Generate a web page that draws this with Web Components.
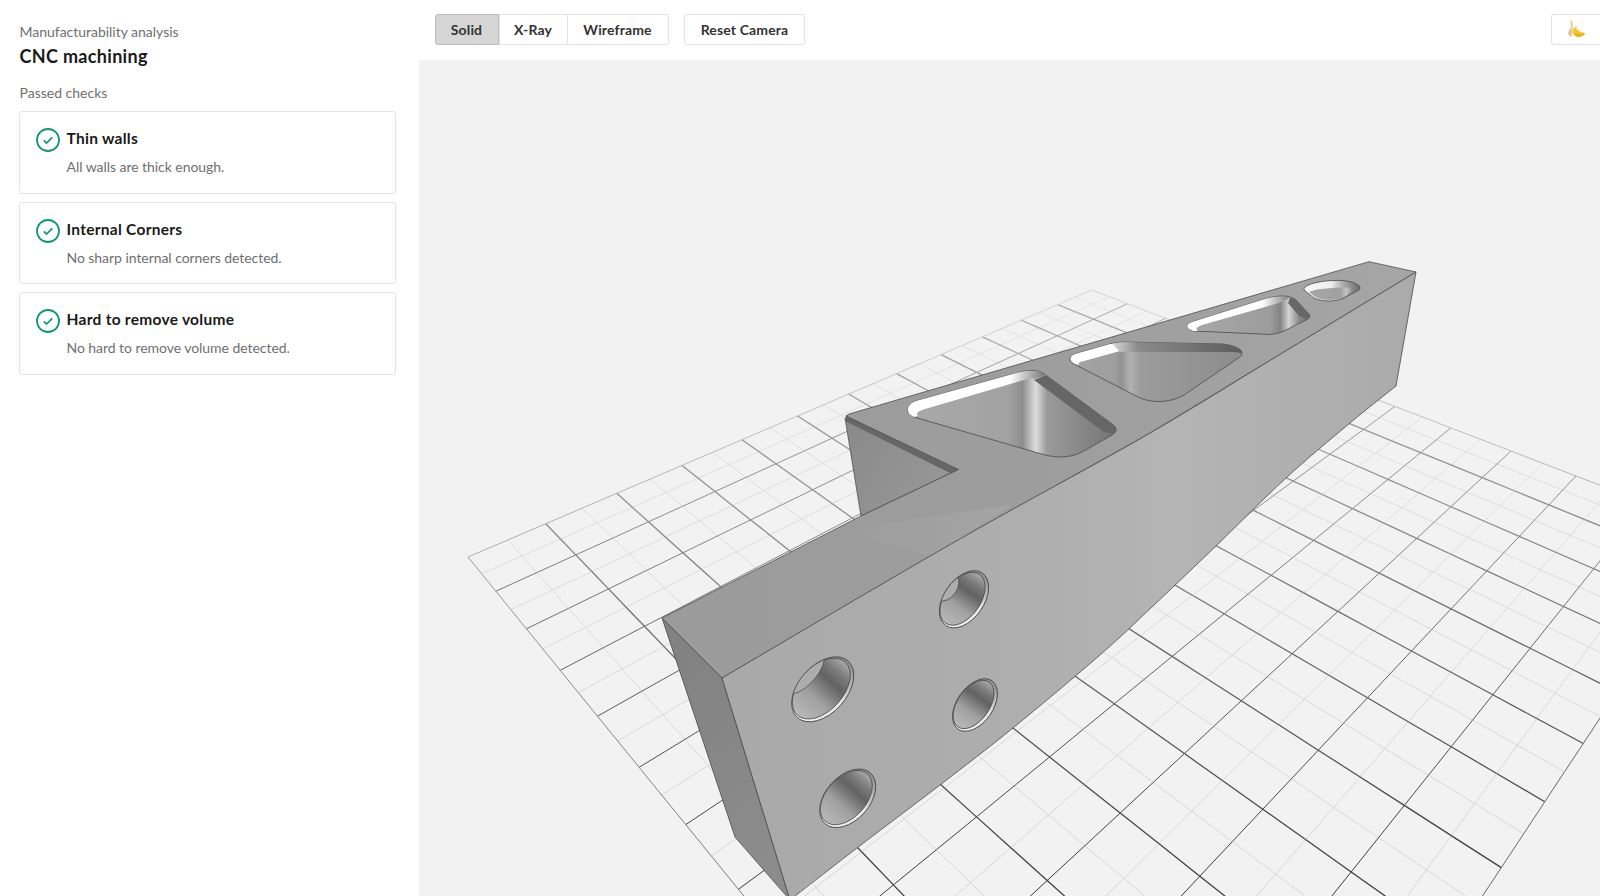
<!DOCTYPE html>
<html><head><meta charset="utf-8"><title>CNC machining</title>
<style>html,body{margin:0;height:100%;overflow:hidden;background:#fff;font-family:Lato,"Liberation Sans",sans-serif}</style>
</head><body>
<app-shell>
  <side-panel slot="side">
    <check-card title-text="Thin walls" desc="All walls are thick enough."></check-card>
    <check-card title-text="Internal Corners" desc="No sharp internal corners detected."></check-card>
    <check-card title-text="Hard to remove volume" desc="No hard to remove volume detected."></check-card>
  </side-panel>
  <tool-bar slot="main"></tool-bar>
  <viewer-canvas slot="main"></viewer-canvas>
</app-shell>
<script>
customElements.define('app-shell',class extends HTMLElement{constructor(){super();this.attachShadow({mode:'open'}).innerHTML=`<style>
:host{display:grid;grid-template-columns:419px 1fr;height:896px;width:1600px;overflow:hidden}
.m{display:flex;flex-direction:column;min-width:0;height:896px;overflow:hidden}
</style><slot name="side"></slot><div class="m"><slot name="main"></slot></div>`}});

customElements.define('side-panel',class extends HTMLElement{constructor(){super();this.attachShadow({mode:'open'}).innerHTML=`<style>
:host{display:block;padding:22px 23px 0 19px;font-family:Lato,"Liberation Sans",sans-serif}
.e{font-size:14px;line-height:20px;color:#707070;padding-left:.5px;letter-spacing:-.02px}
h1{margin:2px 0 0;font-size:18px;line-height:24px;font-weight:700;color:#1a1a1a;letter-spacing:.33px;padding-left:.5px}
.p{margin:15px 0 8px;font-size:14px;line-height:20px;color:#707070;padding-left:.5px}
.l{display:flex;flex-direction:column;gap:8px}
</style><div class="e">Manufacturability analysis</div><h1>CNC machining</h1><div class="p">Passed checks</div><div class="l"><slot></slot></div>`}});

customElements.define('check-card',class extends HTMLElement{constructor(){super();this.attachShadow({mode:'open'}).innerHTML=`<style>
:host{display:grid;grid-template-columns:24px 1fr;column-gap:7px;box-sizing:border-box;height:82.5px;padding:14px 15px 0 15.5px;border:1px solid #e3e3e3;border-radius:3px;background:#fff}
svg{width:24px;height:24px;margin-top:2px;display:block}
.t{font-size:15.5px;line-height:24px;font-weight:700;color:#1a1a1a;letter-spacing:.28px}
.d{margin-top:7px;font-size:14px;line-height:20px;color:#6f6f6f;letter-spacing:-.05px}
</style><svg viewBox="0 0 24 24" fill="none" stroke="#12996b"><circle cx="12" cy="12" r="11" stroke-width="1.8"/><path d="M7.800 12.300l2.700 2.800 5.800-5.800" stroke-width="1.700"/></svg><div><div class="t"></div><div class="d"></div></div>`}
connectedCallback(){this.shadowRoot.querySelector('.t').textContent=this.getAttribute('title-text');this.shadowRoot.querySelector('.d').textContent=this.getAttribute('desc')}});

customElements.define('tool-bar',class extends HTMLElement{constructor(){super();this.attachShadow({mode:'open'}).innerHTML=`<style>
:host{display:flex;flex:none;box-sizing:border-box;height:60px;padding:14px 0 0 15.5px;background:#fff;font-family:Lato,"Liberation Sans",sans-serif;margin-right:-40px}
button{all:unset;box-sizing:border-box;height:31px;display:flex;align-items:center;justify-content:center;font-size:14px;font-weight:700;color:#333;background:#fff;border:1px solid #e3e3e3;letter-spacing:.14px}
.g{display:flex}
.g button{border-right:0}
.g button:first-child{border-radius:3px 0 0 3px;background:#d6d6d6;border-color:#bcbcbc;border-right:1px solid #bcbcbc;width:64px}
.g button:nth-child(2){width:68px}
.g button:nth-child(3){width:102px;border-right:1px solid #e3e3e3;border-radius:0 3px 3px 0}
.r{margin-left:15.5px;width:121px;border-radius:3px}
.b{margin-left:auto;width:89px;border-radius:3px 0 0 3px;border-right:0;justify-content:flex-start;padding:0 0 0 16px}
svg{width:18px;height:18px;display:block;margin-top:-4px}
</style><div class="g"><button>Solid</button><button>X-Ray</button><button>Wireframe</button></div><button class="r">Reset Camera</button><button class="b" aria-label="banana"><svg viewBox="0 0 18 18"><path d="M3 .5C2 3 2.500 6 3 8L5 11C4.800 7 5 3 3.500 .5Z" fill="#e4cfa6"/><path d="M0 14C.5 11 2 9 4 8.500L5 13C4.500 15 3.500 17 2.500 18 1.500 17.500 .5 16 0 14Z" fill="#dfc89e"/><path d="M6 8C7 6.500 9 6.500 10 7.500 9 8 8.500 8.500 8.500 9.500Z" fill="#f1e4c6"/><path d="M5.500 9C7 8 8 9 8.800 10 10.500 12.300 14 13.500 17 14 16.500 16.500 13 18 9.500 17.800 6.500 17.500 4.800 14.500 5 12Z" fill="#f8c820"/><path d="M5.500 13.500C7.500 15.300 12 16 17 14 16.500 16.500 13 18 9.500 17.800 7.500 17.600 6 15.500 5.500 13.500Z" fill="#eeae14"/></svg></button>`}});

customElements.define('viewer-canvas',class extends HTMLElement{
constructor(){super();
const S=this.attachShadow({mode:'open'});
// ---------- ground grid: projective map from grid coords (u,v) to screen
const src=[[0,0],[12,0],[12,10],[7,10]],dst=[[468,557],[1092,290],[1576,476],[1411.5,651]];
const A=[];for(let k=0;k<4;k++){const[u,v]=src[k],[x,y]=dst[k];A.push([u,v,1,0,0,0,-u*x,-v*x,x]);A.push([0,0,0,u,v,1,-u*y,-v*y,y]);}
for(let i=0;i<8;i++){let p=i;for(let r=i;r<8;r++)if(Math.abs(A[r][i])>Math.abs(A[p][i]))p=r;[A[i],A[p]]=[A[p],A[i]];for(let r=0;r<8;r++)if(r!==i){const f=A[r][i]/A[i][i];for(let c=i;c<9;c++)A[r][c]-=f*A[i][c];}}
const H=A.map((r,i)=>r[8]/r[i]);
const P=(u,v)=>{const w=H[6]*u+H[7]*v+1;return[(H[0]*u+H[1]*v+H[2])/w,(H[3]*u+H[4]*v+H[5])/w,w]};
const hex=n=>{n=Math.round(n);return'rgb('+n+','+n+','+n+')'};
const mix=(a,b,t)=>a+(b-a)*Math.max(0,Math.min(1,t));
const shade=(w,kind)=>{
 if(kind==='minor')return mix(205,226,(w-.6)/.9);
 if(kind==='edge')return mix(110,200,(w-.7)/.8);
 if(kind==='near')return 105;
 return w<1.05?mix(60,140,(w-.7)/.35):mix(140,176,(w-1.05)/.5)};
let g='';
const seg=(f,kind,sw)=>{const n=24;for(let i=0;i<n;i++){const a=P(...f(i/n)),b=P(...f((i+1)/n));const c=(a[2]+b[2])/2;
 if(a[1]>930&&b[1]>930)continue;
 g+=`<line x1="${a[0].toFixed(1)}" y1="${a[1].toFixed(1)}" x2="${b[0].toFixed(1)}" y2="${b[1].toFixed(1)}" stroke="${hex(shade(c,kind))}" stroke-width="${sw}"/>`}};
for(let k=1;k<24;k+=2){seg(t=>[k/2,t*12],'minor',.8);seg(t=>[t*12,k/2],'minor',.8)}
for(let k=1;k<12;k++){seg(t=>[t*12,k],'major',1);seg(t=>[k,t*12],'major',1.25)}
seg(t=>[t*12,0],'edge',.7);seg(t=>[0,t*12],'edge',.9);seg(t=>[12,t*12],'edge',.7);seg(t=>[t*12,12],'near',1);
// ---------- smooth curve through points (Catmull-Rom)
const smooth=pts=>{let d='';for(let i=0;i<pts.length-1;i++){const p0=pts[Math.max(0,i-1)],p1=pts[i],p2=pts[i+1],p3=pts[Math.min(pts.length-1,i+2)];
 d+=`C${(p1[0]+(p2[0]-p0[0])/6).toFixed(1)} ${(p1[1]+(p2[1]-p0[1])/6).toFixed(1)} ${(p2[0]-(p3[0]-p1[0])/6).toFixed(1)} ${(p2[1]-(p3[1]-p1[1])/6).toFixed(1)} ${p2[0]} ${p2[1]}`}return d};
const lower=smooth([[1396,386],[1350,423],[1286,478],[1217,545],[1153,606],[1100,655],[1013,728],[940,785],[857,848],[790,900]]);
const upper=smooth([[722,678],[958,540],[1145,436],[1279,355],[1416,272]]);
// ---------- holes on the front face
const hole=(id,cx,cy,a,b,r,cres)=>`<g transform="translate(${cx} ${cy}) rotate(${r})">
<ellipse rx="${a}" ry="${b}" fill="url(#rim)" stroke="#4a4a4a" stroke-width=".9"/>
<clipPath id="c${id}"><ellipse cx="-.4" cy="-1.500" rx="${a-2.2}" ry="${b-2}"/></clipPath>
<ellipse cx="-.4" cy="-1.500" rx="${a-2.2}" ry="${b-2}" fill="url(#hg)" stroke="#4a4a4a" stroke-width=".8"/>
${cres?`<ellipse clip-path="url(#c${id})" cx="0" cy="${-b}" rx="${a*cres}" ry="${b*.46}" fill="#adadad" stroke="#4a4a4a" stroke-width=".7"/>`:''}
</g>`;
S.innerHTML=`<style>:host{display:block;flex:1;min-height:0;background:#f2f2f2;overflow:hidden}svg{display:block;width:1181px;height:836px}</style>
<svg viewBox="419 60 1181 836" xmlns="http://www.w3.org/2000/svg">
<defs>
<linearGradient id="front" gradientUnits="userSpaceOnUse" x1="720" y1="0" x2="1420" y2="0"><stop offset="0" stop-color="#a9a9a9"/><stop offset=".4" stop-color="#adadad"/><stop offset=".65" stop-color="#b4b4b4"/><stop offset="1" stop-color="#aaaaaa"/></linearGradient>
<linearGradient id="top" gradientUnits="userSpaceOnUse" x1="660" y1="0" x2="1400" y2="0"><stop offset="0" stop-color="#9b9b9b"/><stop offset=".5" stop-color="#9d9d9d"/><stop offset="1" stop-color="#a5a5a5"/></linearGradient>
<linearGradient id="end" gradientUnits="userSpaceOnUse" x1="680" y1="660" x2="770" y2="860"><stop offset="0" stop-color="#828282"/><stop offset="1" stop-color="#8c8c8c"/></linearGradient>
<linearGradient id="wall" gradientUnits="userSpaceOnUse" x1="845" y1="430" x2="930" y2="480"><stop offset="0" stop-color="#8a8a8a"/><stop offset="1" stop-color="#959595"/></linearGradient>
<linearGradient id="hg" x1="0" x2="1" y1="0" y2="0"><stop offset="0" stop-color="#b8b8b8"/><stop offset=".35" stop-color="#a0a0a0"/><stop offset=".66" stop-color="#626262"/><stop offset=".82" stop-color="#7a7a7a"/><stop offset="1" stop-color="#aaaaaa"/></linearGradient>
<linearGradient id="rim" x1="0" x2="1" y1="0" y2="0"><stop offset="0" stop-color="#f0f0f0"/><stop offset=".55" stop-color="#e4e4e4"/><stop offset="1" stop-color="#8e8e8e"/></linearGradient>
<linearGradient id="f1" gradientUnits="userSpaceOnUse" x1="915" y1="0" x2="1118" y2="0"><stop offset="0" stop-color="#a8a8a8"/><stop offset=".46" stop-color="#a2a2a2"/><stop offset=".53" stop-color="#8e8e8e"/><stop offset=".595" stop-color="#dcdcdc"/><stop offset=".65" stop-color="#9a9a9a"/><stop offset="1" stop-color="#747474"/></linearGradient>
<linearGradient id="f2" gradientUnits="userSpaceOnUse" x1="1075" y1="0" x2="1242" y2="0"><stop offset="0" stop-color="#a4a4a4"/><stop offset=".24" stop-color="#9e9e9e"/><stop offset=".28" stop-color="#929292"/><stop offset=".33" stop-color="#b2b2b2"/><stop offset=".39" stop-color="#9c9c9c"/><stop offset="1" stop-color="#8c8c8c"/></linearGradient>
<linearGradient id="f3" gradientUnits="userSpaceOnUse" x1="1190" y1="0" x2="1312" y2="0"><stop offset="0" stop-color="#a8a8a8"/><stop offset=".66" stop-color="#9c9c9c"/><stop offset=".74" stop-color="#848484"/><stop offset=".81" stop-color="#d4d4d4"/><stop offset=".89" stop-color="#8c8c8c"/><stop offset="1" stop-color="#6c6c6c"/></linearGradient>
<linearGradient id="db2" gradientUnits="userSpaceOnUse" x1="1112" y1="0" x2="1242" y2="0"><stop offset="0" stop-color="#d8d8d8"/><stop offset=".2" stop-color="#8a8a8a"/><stop offset="1" stop-color="#5c5c5c"/></linearGradient>
<linearGradient id="w1" gradientUnits="userSpaceOnUse" x1="1010" y1="0" x2="1044" y2="0"><stop offset="0" stop-color="#fff"/><stop offset="1" stop-color="#7a7a7a"/></linearGradient>
<linearGradient id="w3" gradientUnits="userSpaceOnUse" x1="1262" y1="0" x2="1292" y2="0"><stop offset="0" stop-color="#fff"/><stop offset="1" stop-color="#777"/></linearGradient>
<linearGradient id="h4" gradientUnits="userSpaceOnUse" x1="1306" y1="0" x2="1360" y2="0"><stop offset="0" stop-color="#f6f6f6"/><stop offset=".45" stop-color="#f0f0f0"/><stop offset=".7" stop-color="#a8a8a8"/><stop offset="1" stop-color="#6c6c6c"/></linearGradient>
<linearGradient id="h4f" gradientUnits="userSpaceOnUse" x1="1308" y1="0" x2="1353" y2="0"><stop offset="0" stop-color="#a8a8a8"/><stop offset=".72" stop-color="#a0a0a0"/><stop offset=".85" stop-color="#c4c4c4"/><stop offset="1" stop-color="#8a8a8a"/></linearGradient>
<linearGradient id="facet" gradientUnits="userSpaceOnUse" x1="830" y1="0" x2="1010" y2="0"><stop offset="0" stop-color="#a3a3a3" stop-opacity="0"/><stop offset="1" stop-color="#a5a5a5"/></linearGradient>
</defs>
<g shape-rendering="geometricPrecision">${g}</g>
<!-- notch wall behind the top face -->
<path d="M845 418L958.500 469.500 861 516Z" fill="url(#wall)" stroke="#444" stroke-width=".7"/>
<path d="M846 415L958.500 469.500 950 473 845 421Z" fill="#676767"/>
<!-- end face -->
<path d="M662 618L722 678 790 900 735 837Z" fill="url(#end)" stroke="#4a4a4a" stroke-width=".8" stroke-linejoin="round"/>
<!-- top face -->
<path d="M662 618L861 516 958.500 469.500 846 416 849 414 1369 261.700 1416 272 L1279 355 1145 436 958 540 722 678Z" fill="url(#top)" stroke="#4c4c4c" stroke-width=".8" stroke-linejoin="round"/>
<path d="M835 530L1012 505 958 540 930 556Z" fill="url(#facet)"/>
<!-- front face -->
<path d="M722 678${upper}L1396 386${lower}Z" fill="url(#front)" stroke="#4a4a4a" stroke-width=".8" stroke-linejoin="round"/>
<!-- pocket 1 -->
<path d="M914 417C905 413 906 405 916 401L1020 372C1032 369 1040 370 1047 376L1112 424C1118 428 1117 432 1112 435L1082 452C1070 458 1058 458 1045 455Z" fill="url(#f1)" stroke="#4a4a4a" stroke-width=".8"/>
<path d="M914 417C905 413 906 405 916 401L1020 372C1030 370 1038 370 1045 375L1035 379C1031 378 1028 378 1024 380L925 409C919 411 915 413 918 416Z" fill="url(#w1)"/>
<path d="M1045 375.500L1047 376 1112 424C1116 427 1117 430 1114 434L1104 432 1034 380Z" fill="#666"/>
<!-- pocket 2 -->
<path d="M1074 364C1068 361 1069 356 1075 354L1110 344C1114 343 1118 342 1124 342L1222 344C1234 345 1242 349 1242 353 1242 356 1240 357 1237 359L1184 395C1172 402 1155 404 1140 398Z" fill="url(#f2)" stroke="#4a4a4a" stroke-width=".8"/>
<path d="M1075 364C1069 361 1069 356 1075 354L1110 344 1120 344 1120 351 1084 361C1079 362 1078 363 1079 365Z" fill="#fff"/>
<path d="M1112 343.500C1116 342.500 1120 342 1124 342L1222 344C1234 345 1242 349 1242 353L1233 352 1120 351.700Z" fill="url(#db2)"/>
<!-- pocket 3 -->
<path d="M1193 331C1186 328 1185 325 1192 322L1268 298C1280 295 1290 295 1296 300L1308 313C1311 316 1310 318 1306 320L1284 331C1277 334 1270 335 1262 334Z" fill="url(#f3)" stroke="#4a4a4a" stroke-width=".8"/>
<path d="M1193 331C1186 328 1185 325 1192 322L1268 298C1276 296 1284 296 1290 298L1279 303 1202 325C1196 327 1195 329 1198 331Z" fill="url(#w3)"/>
<path d="M1290 297.500C1293 298 1295 299 1296 300L1308 313C1311 316 1310 318 1307 319L1300 317 1288 303Z" fill="#686868"/>
<!-- pocket 4 -->
<path d="M1304 290C1303 286 1312 283 1322 281.500 1336 279.500 1352 280 1358 285 1362 288 1360 290 1355 292L1344 298C1336 302 1322 302 1314 298Z" fill="url(#h4)" stroke="#4a4a4a" stroke-width=".8"/>
<path d="M1309 292C1315 289 1330 287.500 1348 287.500 1352 287.500 1353 290 1351 292L1344 297C1336 301 1322 301 1315 297Z" fill="url(#h4f)"/>
${hole(1,822.7,689.3,38,24,-48,.68)}
${hole(2,964,599.3,32,20,-55,.46)}
${hole(3,975,705,29.5,18,-55,0)}
${hole(4,847.7,798.3,34,22,-48,0)}
</svg>`;
}});
</script>
</body></html>
